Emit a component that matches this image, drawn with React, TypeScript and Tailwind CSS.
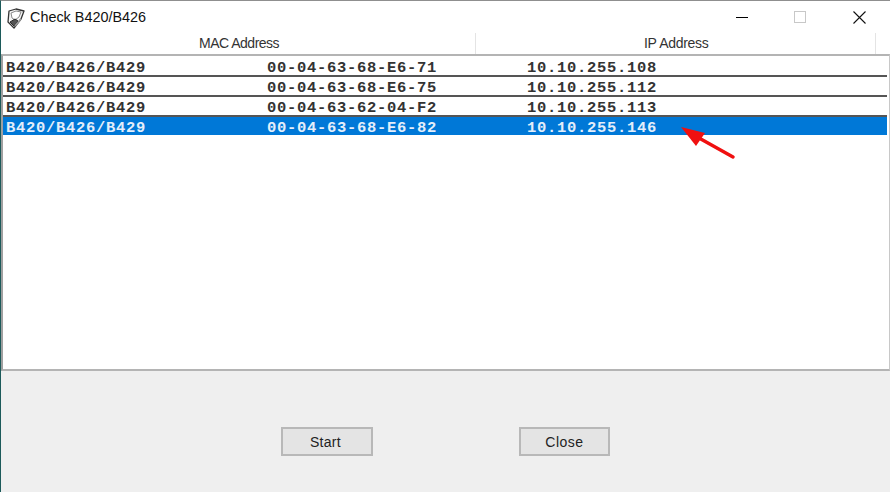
import React from 'react';

const rows = [
  { name: 'B420/B426/B429', mac: '00-04-63-68-E6-71', ip: '10.10.255.108' },
  { name: 'B420/B426/B429', mac: '00-04-63-68-E6-75', ip: '10.10.255.112' },
  { name: 'B420/B426/B429', mac: '00-04-63-62-04-F2', ip: '10.10.255.113' },
  { name: 'B420/B426/B429', mac: '00-04-63-68-E6-82', ip: '10.10.255.146', selected: true },
];

const sans = 'font-["Liberation_Sans",Arial,sans-serif]';

const App = () => {
  return (
    <div className={`relative flex h-[492px] w-[890px] flex-col overflow-hidden border-t border-l border-t-[#8f8f8f] border-l-[#1c5a5a] bg-[#efefef] ${sans}`}>
      {/* Title bar */}
      <div className="flex h-[32px] shrink-0 items-center bg-white pl-[5px]">
        <svg width="20" height="22" viewBox="0 0 20 22" className="mt-[1px] shrink-0">
          <path d="M3 4 L10 2 L18 4 L15 12 L8 21 L2 15 Z" fill="#f4f4f4" stroke="#333" strokeWidth="1.3" strokeLinejoin="round" />
          <path d="M5 6 L10 4 L15 5 L13 10 L9 13 L6 11 Z" fill="#fff" stroke="#8a8a8a" strokeWidth="1" />
          <path d="M4 15 L9 12 L12 14 L8 19 Z" fill="#555" stroke="#2a2a2a" strokeWidth="1" />
          <path d="M9 19 L15 12" stroke="#999" strokeWidth="1.6" />
        </svg>
        <span className="ml-[4px] text-[14.4px] leading-none text-[#111]">Check B420/B426</span>
        <div className="ml-auto flex items-center">
          <div className="mr-[46px] h-px w-[12px] bg-black" />
          <div className="mr-[45px] h-[12px] w-[12px] border border-[#c8c8c8]" />
          <svg width="16" height="16" viewBox="0 0 16 16" className="mr-[23px]">
            <path d="M2.5 2.5 L14.5 14.5 M14.5 2.5 L2.5 14.5" stroke="#111" strokeWidth="1.1" />
          </svg>
        </div>
      </div>

      {/* Column header */}
      <div className="flex h-[21px] shrink-0 bg-white text-[14px] leading-[21px] text-[#333]">
        <div className="w-[475px] border-r border-[#e4e4e4] pl-[198px] tracking-[-0.5px]">MAC Address</div>
        <div className="w-[400px] border-r border-[#e4e4e4] pl-[168px] tracking-[-0.3px]">IP Address</div>
      </div>

      {/* Device list */}
      <div className="h-[317px] shrink-0 border-y-2 border-r border-l-2 border-t-[#b4b4b4] border-r-[#c8c8c8] border-b-[#b4b4b4] border-l-[#a0a0a0] bg-white font-['Liberation_Mono',monospace] text-[15.5px] font-bold tracking-[0.7px] text-[#333]">
        {rows.map((row, i) => (
          <div
            key={row.mac}
            className={`flex w-[884px] items-center leading-none ${i > 0 ? 'h-[20px] border-t-2 border-[#555] pt-[5px]' : 'h-[19px] pt-[6px]'} ${row.selected ? 'bg-[#0078d7] text-[#e4eefa]' : 'bg-white'}`}
          >
            <span className="w-[264px] pl-[3px]">{row.name}</span>
            <span className="w-[260px]">{row.mac}</span>
            <span>{row.ip}</span>
          </div>
        ))}
      </div>

      {/* Buttons */}
      <div className="flex flex-1 items-start pt-[56px] pl-[280px]">
        <button className="h-[29px] w-[92px] border-2 border-[#b8b8b8] bg-[#e4e4e4] pt-px pr-[3px] text-[14px] tracking-[0.3px] text-[#222]">Start</button>
        <button className="ml-[146px] h-[29px] w-[91px] border-2 border-[#b8b8b8] bg-[#e4e4e4] pt-px text-[14px] tracking-[0.5px] text-[#222]">Close</button>
      </div>

      {/* Gray stretch of the left window edge */}
      <div className="absolute top-[242px] -left-px h-[87px] w-px bg-[#999]" />

      {/* Annotation arrow over the selected row */}
      <svg width="60" height="40" viewBox="0 0 60 40" className="absolute top-[124px] left-[680px]">
        <path d="M52 32 L18 13" stroke="#f01010" strokeWidth="3.5" strokeLinecap="round" />
        <path d="M0 2 L24 8 L15 21 Z" fill="#f01010" />
      </svg>
    </div>
  );
};

export default App;
